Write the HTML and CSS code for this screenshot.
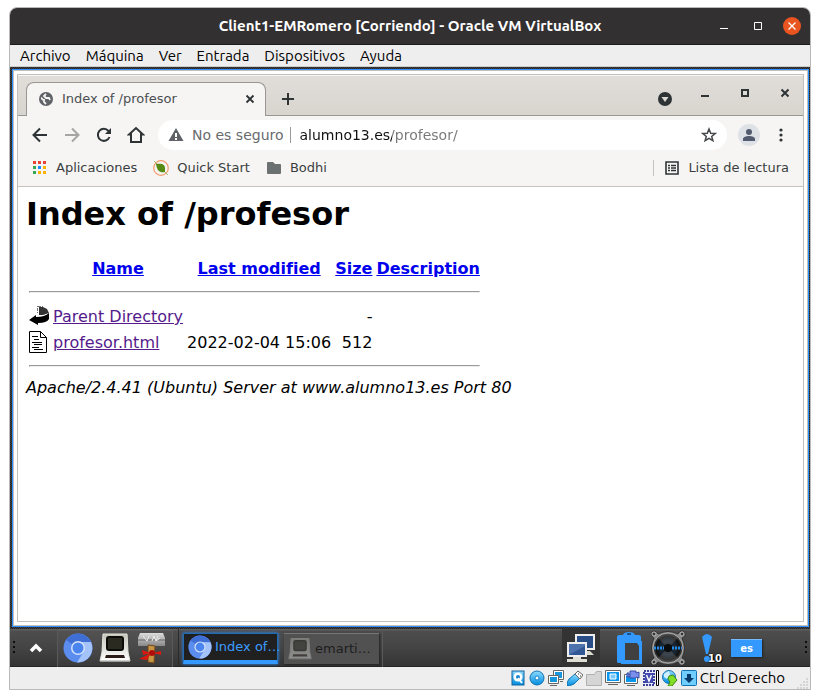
FILE: index.html
```html
<!DOCTYPE html>
<html lang="es">
<head>
<meta charset="utf-8">
<meta name="viewport" content="width=device-width, initial-scale=1">
<title>Client1-EMRomero [Corriendo] - Oracle VM VirtualBox</title>
<link rel="stylesheet" href="styles.css">
</head>
<body>
<svg class="defs" width="0" height="0" aria-hidden="true">
  <defs>
    <linearGradient id="blue" x1="0" y1="0" x2="0" y2="1"><stop offset="0" stop-color="#8edcff"/><stop offset="1" stop-color="#008ce0"/></linearGradient>
    <linearGradient id="cream" x1="0" y1="0" x2="0" y2="1"><stop offset="0" stop-color="#c3c4b8"/><stop offset="1" stop-color="#fff"/></linearGradient>
    <linearGradient id="steel" x1="0" y1="0" x2="0" y2="1"><stop offset="0" stop-color="#ddd"/><stop offset="1" stop-color="#888"/></linearGradient>
    <radialGradient id="cone"><stop offset="0" stop-color="#111"/><stop offset=".45" stop-color="#1b2a38"/><stop offset=".8" stop-color="#111"/><stop offset="1" stop-color="#555"/></radialGradient>
    <symbol id="chromium" viewBox="0 0 30 30">
      <circle cx="15" cy="15" r="14.500" fill="#5b8def"/>
      <path d="M15 15 3 7A14.500 14.500 0 0 1 28 9H15z" fill="#3f6fd4"/>
      <path d="M15 9H28A14.500 14.500 0 0 1 14 29.500L21 18z" fill="#a3c3fa"/>
      <circle cx="15" cy="15" r="7" fill="#d4e2fc"/><circle cx="15" cy="15" r="5.500" fill="#4a84ee"/>
    </symbol>
    <symbol id="terminal" viewBox="0 0 32 30">
      <path d="M4 1h24l1 18 2 9H1l2-9z" fill="url(#cream)" stroke="#e5e5dd"/>
      <rect x="7" y="3" width="18" height="15" rx="3" fill="#0b0b08"/><path d="M9 5h14v11H9z" fill="#2b2a20"/>
      <path d="M7 22h18l1 3H6z" fill="#2b1c18"/><path d="M1 28h30" stroke="#aaa"/>
    </symbol>
  </defs>
</svg>
<main class="window">
  <header class="titlebar">
    <h1 class="window-title">Client1-EMRomero [Corriendo] - Oracle VM VirtualBox</h1>
    <div class="window-buttons">
      <button type="button" aria-label="Minimizar"><svg width="18" height="18"><path d="M5 11h8v1H5z" fill="#fff"/></svg></button>
      <button type="button" aria-label="Maximizar"><svg width="18" height="18"><path d="M5.500 5.500h7v7h-7z" fill="none" stroke="#fff"/></svg></button>
      <button type="button" aria-label="Cerrar"><svg width="18" height="18"><circle cx="9" cy="9" r="9" fill="#e95420"/><path d="m5.500 5.500 7 7m0-7-7 7" stroke="#fff" stroke-width="1.300"/></svg></button>
    </div>
  </header>
  <nav class="menubar">
    <button type="button">Archivo</button><button type="button">Máquina</button><button type="button">Ver</button><button type="button">Entrada</button><button type="button">Dispositivos</button><button type="button">Ayuda</button>
  </nav>
  <div class="guest">
    <section class="desktop">
      <article class="browser">
        <div class="tabstrip">
          <div class="tab">
            <svg width="16" height="16"><circle cx="8" cy="8" r="7" fill="#5f6368"/><path d="M3 7c1 0 1 2 3 2v2l2 2M8 3 6 5l2 2h3l1 2" fill="none" stroke="#f6f5f4" stroke-width="1.800"/></svg>
            <span class="tab-title">Index of /profesor</span>
            <button type="button" aria-label="Cerrar pestaña"><svg width="16" height="16"><path d="m4.500 4.500 7 7m0-7-7 7" stroke="#2e3436" stroke-width="1.800"/></svg></button>
          </div>
          <button type="button" class="new-tab" aria-label="Nueva pestaña"><svg width="16" height="16"><path d="M8 2v12M2 8h12" stroke="#2e3436" stroke-width="2"/></svg></button>
          <div class="browser-buttons">
            <button type="button" class="tab-search" aria-label="Buscar pestañas"><svg width="16" height="16"><circle cx="8" cy="8" r="7" fill="#2e3436"/><path d="M4.500 6h7L8 11z" fill="#dedbd7"/></svg></button>
            <button type="button" aria-label="Minimizar"><svg width="16" height="16"><path d="M4 10h8v2H4z" fill="#2e3436"/></svg></button>
            <button type="button" aria-label="Maximizar"><svg width="16" height="16"><path d="M5 5h6v6H5z" fill="none" stroke="#2e3436" stroke-width="2"/></svg></button>
            <button type="button" aria-label="Cerrar"><svg width="16" height="16"><path d="m4.500 4.500 7 7m0-7-7 7" stroke="#2e3436" stroke-width="2"/></svg></button>
          </div>
        </div>
        <div class="toolbar">
          <button type="button" aria-label="Atrás"><svg width="16" height="16"><path d="M15 8H2.500M8 1.500 1.500 8 8 14.500" fill="none" stroke="#2e3436" stroke-width="2"/></svg></button>
          <button type="button" aria-label="Adelante"><svg width="16" height="16"><path d="M1 8h12.500M8 1.500 14.500 8 8 14.500" fill="none" stroke="#a5a5a3" stroke-width="2"/></svg></button>
          <button type="button" aria-label="Recargar"><svg width="16" height="16"><path d="M13.500 10A6 6 0 1 1 12.500 4" fill="none" stroke="#2e3436" stroke-width="2"/><path d="M15 1v6H9z" fill="#2e3436"/></svg></button>
          <button type="button" aria-label="Inicio"><svg width="18" height="18"><path d="M4 8.500V16h10V8.500h2L9 2 2 8.500z" fill="none" stroke="#2e3436" stroke-width="2"/></svg></button>
          <form class="address-bar">
            <svg width="16" height="16"><path d="m8 1 7.500 13H.5z" fill="#5f6368"/><path d="M7 6h2v4H7zm0 5h2v2H7z" fill="#fff"/></svg>
            <label class="insecure" for="url">No es seguro</label>
            <input id="url" class="url" type="text" value="alumno13.es/profesor/">
            <button type="button" aria-label="Marcador"><svg width="16" height="16"><path d="m8 2 1.700 4.200 4.500.3-3.500 2.900 1.200 4.300L8 11.300l-3.900 2.400 1.200-4.300-3.500-2.900 4.500-.3z" fill="none" stroke="#45484b" stroke-width="1.500"/></svg></button>
          </form>
          <button type="button" aria-label="Perfil"><svg width="22" height="22"><circle cx="11" cy="11" r="11" fill="#dee1e6"/><circle cx="11" cy="8" r="3" fill="#515a6e"/><path d="M5 17v-2c0-4 12-4 12 0v2z" fill="#515a6e"/></svg></button>
          <button type="button" aria-label="Menú"><svg width="16" height="16" fill="#2e3436"><circle cx="8" cy="3" r="1.600"/><circle cx="8" cy="8" r="1.600"/><circle cx="8" cy="13" r="1.600"/></svg></button>
        </div>
        <nav class="bookmarks">
          <button type="button"><svg width="16" height="16"><path d="M1 1h3v3H1zm5 0h3v3H6zm5 0h3v3h-3z" fill="#ea4335"/><path d="M1 6h3v3H1zM1 11h3v3H1z" fill="#34a853"/><path d="M6 6h3v3H6z" fill="#1a88ff"/><path d="M11 6h3v3h-3zM6 11h3v3H6zM11 11h3v3h-3z" fill="#fbb300"/></svg>Aplicaciones</button>
          <button type="button"><svg width="16" height="16"><circle cx="8" cy="8" r="7.300" fill="none" stroke="#f59a69" stroke-width="1.200"/><path d="m1 1 14 14" stroke="#a5bd79"/><path d="M3 4c5-1 9 0 9 4v4c-5 1-8-1-9-8" fill="#568a13"/></svg>Quick Start</button>
          <button type="button"><svg width="16" height="16"><path d="M1 3q0-1 1-1h5l2 2h5q1 0 1 1v8q0 1-1 1H2q-1 0-1-1z" fill="#6b7071"/></svg>Bodhi</button>
          <button type="button" class="reading"><svg width="16" height="16"><path d="M2 2h12v12H2z" fill="none" stroke="#2e3436" stroke-width="1.600"/><path d="M4 5.500h2m1 0h5M4 8h2m1 0h5M4 10.500h2m1 0h5" stroke="#2e3436" stroke-width="1.400"/></svg>Lista de lectura</button>
        </nav>
        <div class="page">
          <h2>Index of /profesor</h2>
          <table>
            <thead>
              <tr><th></th><th><a href="#">Name</a></th><th><a href="#">Last modified</a></th><th><a href="#">Size</a></th><th><a href="#">Description</a></th></tr>
            </thead>
            <tbody>
              <tr><td colspan="5"><hr></td></tr>
              <tr><td><svg width="20" height="22"><path d="M8.500 1v8M10.500 1v8M9 1.500h5M8 4.500h7" stroke="#777" stroke-dasharray="1 1"/><path d="M10 2h4l4 2 2 4-6 2h-4z" fill="#333"/><path d="M20 8v6q-2 4-11 4v2L0 15l7-5v2q9 0 13-4" fill="#000"/></svg></td><td><a class="visited" href="#">Parent Directory</a></td><td></td><td class="num">-</td><td></td></tr>
              <tr><td><svg width="20" height="22" fill="none" stroke="#000"><path d="M.5.500h11l6 6v15H.5zM11.500.500v6h6M3 5.500h6M5 8.500h5M3 11.500h10M5 13.500h8M3 16.500h7M5 18.500h9"/></svg></td><td><a class="visited" href="#">profesor.html</a></td><td class="num">2022-02-04 15:06</td><td class="num">512</td><td></td></tr>
              <tr><td colspan="5"><hr></td></tr>
            </tbody>
          </table>
          <address>Apache/2.4.41 (Ubuntu) Server at www.alumno13.es Port 80</address>
        </div>
      </article>
    </section>
  </div>
  <div class="taskbar">
    <span class="grip"></span>
    <button type="button" class="expand" aria-label="Mostrar menú"><svg width="14" height="12"><path d="m2 9 5-5 5 5" fill="none" stroke="#fff" stroke-width="3.500"/></svg></button>
    <div class="launchers">
      <button type="button" aria-label="Chromium"><svg width="30" height="30"><use href="#chromium"/></svg></button>
      <button type="button" aria-label="Terminal"><svg width="32" height="30"><use href="#terminal"/></svg></button>
      <button type="button" aria-label="Archivos"><svg width="30" height="32"><path d="M3 1h23l2 5v8H1V6z" fill="url(#steel)"/><path d="M1 8h27" stroke="#666"/><path d="m6 4 4 5 2-5m3 5 2-5 2 5m2-5-2 5 4-3" fill="none" stroke="#eee"/><path d="m11 13 7 1-1 17-6-1z" fill="#c79543" stroke="#74461b"/><path d="m14 21-9-3 1 5zm2 0 8-2v4zm-2 0-4 7-8-1 6-3z" fill="#d91910"/><circle cx="15" cy="21" r="3" fill="#b00c0c"/></svg></button>
    </div>
    <div class="tasks">
      <button type="button" class="task active"><svg width="24" height="24"><use href="#chromium"/></svg>Index of…</button>
      <button type="button" class="task"><svg width="24" height="24" opacity=".35"><use href="#terminal"/></svg>emarti…</button>
    </div>
    <div class="tray">
      <button type="button" class="network" aria-label="Red"><svg width="30" height="28"><path d="M10 1h18v14H10z" fill="#294d86" stroke="#eee" stroke-width="2"/><path d="M16 17h8l4 4H14z" fill="#d9d9d0"/><path d="M2 9h18v13H2z" fill="#315795" stroke="#eee" stroke-width="2"/><path d="m3 21 16-9v-2H3z" fill="#4e73ac"/><path d="M7 23h8v2h6v3H1v-3h6z" fill="#deded4"/></svg></button>
      <button type="button" class="clipboard" aria-label="Portapapeles"><svg width="28" height="34"><path d="M2 6q0-2 2-2h4q1-3 6-3t6 3h4q2 0 2 2v4h1v23H6v-1H3q-1 0-1-2z" fill="#3399ff"/><path d="M10 12h12l2 3v14H10z" fill="#404040"/><path d="M12 3h4" stroke="#185487" stroke-width="2"/></svg></button>
      <button type="button" class="speaker" aria-label="Volumen"><svg width="36" height="36"><path d="M3 1q4 0 5 3 10-5 20 0 3-5 6-2 3 4-2 6 5 10 0 20 5 2 2 6-4 3-6-2-10 5-20 0-3 4-6 2-3-3 2-6-5-10 0-20-4-3-1-7" fill="#888" stroke="#333"/><circle cx="18" cy="18" r="15" fill="url(#cone)" stroke="#aaa"/><path d="M8 8 18 18 28 8Q18 0 8 8M8 28l10-10 10 10q-10 8-20 0" fill="#888" opacity=".3"/><path d="M4 18h10m8 0h10" stroke="#248be8" stroke-width="3" stroke-dasharray="2 1"/><circle cx="18" cy="18" r="4" fill="#090a0c"/><g fill="#333" stroke="#bbb"><circle cx="4" cy="4" r="2"/><circle cx="32" cy="4" r="2"/><circle cx="4" cy="32" r="2"/><circle cx="32" cy="32" r="2"/></g></svg></button>
      <button type="button" class="notice" aria-label="Avisos"><svg width="12" height="30"><path d="M1 4q5-6 10 0L7 21H5z" fill="#3399ff"/><circle cx="6" cy="26" r="3" fill="#3399ff"/></svg><span class="count">10</span></button>
      <button type="button" class="layout">es</button>
      <span class="grip"></span>
    </div>
  </div>
  <footer class="statusbar">
    <svg width="16" height="16"><rect x="2" y="1" width="12" height="14" fill="url(#blue)" stroke="#13639b"/><circle cx="8" cy="7" r="4.500" fill="#fff"/><circle cx="8" cy="7" r="2" fill="#1683cc"/><path d="m8 8 4 5" stroke="#fff" stroke-width="2"/></svg>
    <svg width="16" height="16"><circle cx="8" cy="8" r="7" fill="url(#blue)" stroke="#1474b4"/><circle cx="8" cy="8" r="2" fill="#fff" stroke="#1683cc"/></svg>
    <svg width="16" height="16"><path d="M5.500.5h10v9h-10z" fill="#fff" stroke="#666"/><path d="M7 2h7v6H7z" fill="#1596df"/><path d="M.5 5.500h10v8H.5z" fill="#fff" stroke="#666"/><path d="M2 7h7v5H2z" fill="#1596df"/><path d="M2 15.500h7m3-4h3" stroke="#666"/></svg>
    <svg width="16" height="16"><path d="m8 4 5 4-6 6q-4 2-7 2 0-5 2-7z" fill="url(#blue)" stroke="#1474b4"/><path d="m8 4 3-3 5 4-3 4z" fill="#fff" stroke="#666"/><path d="M11 4h1m1 2h1" stroke="#333"/></svg>
    <svg width="16" height="16"><path d="M.5 4.500h8l2-3h5v14H.5z" fill="#d5d5d5" stroke="#b0b0b0"/></svg>
    <svg width="16" height="16"><path d="M.5.500h15v12H.5z" fill="#fff" stroke="#666"/><path d="M2 2h12v9H2z" fill="#0997ed"/><path d="M5 4h6v5H5z" fill="#79caff" stroke="#fff"/><path d="M3 14.500h10" stroke="#666"/></svg>
    <svg width="16" height="16"><path d="M.5 4.500h13v9H.5z" fill="#fff" stroke="#666"/><path d="M2 6h10v6H2z" fill="#0997ed"/><path d="M3 15.500h8" stroke="#666"/><path d="M6 1h6v2l3-1v6l-3-1v1H6zM3 3h2v4H3z" fill="#7b8eeb" stroke="#394daa"/></svg>
    <svg width="16" height="16"><path d="M1 1h10v14H1z" fill="#e6e8ff" stroke="#3b449a" stroke-width="2" stroke-dasharray="2 1"/><path d="M2 3h8v10H2z" fill="#4149ac"/><path d="m3.500 5 2.500 6L8.500 5" fill="none" stroke="#fff" stroke-width="1.500"/><path d="M13.500.5h2v15h-2z" fill="#fff" stroke="#000"/></svg>
    <svg width="16" height="16"><circle cx="7" cy="7" r="6.500" fill="url(#blue)" stroke="#1474b4"/><path d="M2 4 7 1l1 4-3 4-3-2" fill="#d1efff"/><path d="m7 6 4-1 4 5-5 6H6l2-4-2-3z" fill="#82df28" stroke="#428717"/></svg>
    <svg width="16" height="16"><rect x=".5" y=".5" width="15" height="15" rx="1" fill="#70ceff" stroke="#1371b1"/><path d="M6 4h4v4h3l-5 5-5-5h3z" fill="#073b6b"/></svg>
    <span class="host-key">Ctrl Derecho</span>
    <svg class="resize" width="12" height="12"><path d="M10 1v2M7 4v2m3-2v2M4 7v2m3-2v2m3-2v2M1 10v2m3-2v2m3-2v2m3-2v2" stroke="#bbb"/></svg>
  </footer>
</main>
</body>
</html>
```

FILE: styles.css
```css
* { box-sizing: border-box; }

body {
  margin: 0;
  min-height: 100vh;
  padding: 7px 9px 9px;
  display: flex;
  background: #fff;
  color: #000;
  font-family: "DejaVu Sans", Verdana, sans-serif;
}

svg { display: block; flex: none; }
.defs { position: absolute; }

button {
  display: flex;
  align-items: center;
  justify-content: center;
  padding: 0;
  border: 0;
  background: none;
  color: inherit;
  font: inherit;
  white-space: nowrap;
}

.window {
  flex: 1;
  min-width: 0;
  display: flex;
  flex-direction: column;
  border: 1px solid #b9b9b9;
  border-radius: 8px 8px 0 0;
  overflow: hidden;
  background: #eee;
}

.titlebar {
  display: grid;
  grid-template-columns: 1fr auto 1fr;
  align-items: center;
  height: 37px;
  border-bottom: 1px solid #1c1a1b;
  background: #333031;
  color: #fff;
}
.window-title {
  grid-column: 2;
  margin: 0;
  font: bold 15px/20px Ubuntu, "Noto Sans", sans-serif;
  white-space: nowrap;
}
.window-buttons {
  display: flex;
  justify-content: flex-end;
  gap: 16px;
  padding-right: 9px;
}

.menubar {
  display: flex;
  gap: 15px;
  height: 22px;
  padding-left: 10px;
  border-bottom: 1px solid #ccc;
  font: 15px/20px Ubuntu, "Noto Sans", sans-serif;
}

.guest {
  flex: 1;
  display: flex;
  padding: 2px 1px 2px 2px;
  background: repeating-conic-gradient(#222 0 25%, #444 0 50%) 0 0 / 2px 2px;
}
.desktop {
  flex: 1;
  min-width: 0;
  display: flex;
  padding: 4px;
  border: 1px solid #2c8fff;
  background: #fff;
  box-shadow: inset 0 0 0 1px #c4c0bc;
}
.browser {
  flex: 1;
  min-width: 0;
  display: flex;
  flex-direction: column;
  border: 1px solid #c3bfba;
  background: #fff;
}

.tabstrip {
  display: flex;
  height: 41px;
  padding-left: 8px;
  background: linear-gradient(#e1deda, #d8d4ce);
  box-shadow: inset 0 1px #f8f7f6, inset 0 -1px #999693;
}
.tab {
  display: flex;
  align-items: center;
  gap: 8px;
  width: 240px;
  height: 34px;
  margin-top: 7px;
  padding: 0 7px 2px 11px;
  border: 1px solid #999693;
  border-bottom: 0;
  border-radius: 8px 8px 0 0;
  background: #f6f5f4;
  color: #4a4e50;
  font-size: 13px;
}
.tab-title { flex: 1; white-space: nowrap; }
.new-tab { width: 44px; padding-top: 6px; }
.browser-buttons {
  display: flex;
  gap: 4px;
  margin-left: auto;
}
.browser-buttons button { width: 36px; padding-bottom: 6px; }
.browser-buttons .tab-search { padding: 6px 0 0; }

.toolbar {
  display: flex;
  align-items: center;
  height: 38px;
  padding: 0 6px;
  background: #f6f5f4;
}
.toolbar > button { width: 32px; height: 32px; }
.address-bar {
  flex: 1;
  min-width: 0;
  display: flex;
  align-items: center;
  height: 30px;
  margin: 0 6px;
  padding: 0 10px;
  border-radius: 15px;
  background: #fff;
  font-size: 14px;
}
.insecure {
  margin: 0 6px 0 8px;
  color: #686b6e;
  white-space: nowrap;
}
.url {
  flex: 1;
  min-width: 0;
  height: 16px;
  padding: 0 0 0 9px;
  border: 0;
  border-left: 1px solid #999;
  outline: 0;
  background: linear-gradient(90deg, #111 101px, #777 101px) text;
  color: transparent;
  font: inherit;
}

.bookmarks {
  display: flex;
  align-items: center;
  gap: 16px;
  height: 33px;
  padding: 0 14px 5px;
  border-bottom: 1px solid #c8c3bc;
  background: #f6f5f4;
  color: #3a3e40;
  font-size: 13px;
}
.bookmarks button { gap: 8px; height: 16px; }
.bookmarks .reading {
  margin-left: auto;
  padding-left: 10px;
  border-left: 1px solid #c8c3bc;
}

.page { flex: 1; padding: 8px; font-size: 16px; }
h2 { margin: 0 0 23px; font-size: 32px; line-height: 38px; }
a { color: #00e; }
.visited { color: #551a8b; }
table { border-spacing: 2px; }
th, td { padding: 1px; line-height: 20px; white-space: nowrap; }
td { vertical-align: bottom; }
hr { margin: 8px 0; }
.num { text-align: right; }

.taskbar {
  display: flex;
  align-items: center;
  height: 38px;
  background: linear-gradient(#666 0, #4d4d4d 2px, #444 50%, #343434 97%, #191919);
  color: #fff;
}
.grip {
  width: 2px;
  height: 14px;
  margin-left: 3px;
  background: repeating-linear-gradient(#0c0c0c 0 2px, transparent 2px 5px);
}
.expand { width: 42px; }
.launchers {
  display: flex;
  align-items: center;
  gap: 6px;
  height: 38px;
  padding: 0 5px;
  border-left: 1px solid #5a5a5a;
  border-right: 1px solid #5a5a5a;
  background: #ffffff08;
}
.tasks {
  display: flex;
  align-items: center;
  gap: 6px;
  height: 38px;
  margin-left: 5px;
  padding: 0 3px 0 4px;
  border-left: 1px solid #2b2b2b;
  border-right: 1px solid #5a5a5a;
}
.task {
  justify-content: flex-start;
  gap: 3px;
  width: 95px;
  height: 31px;
  padding-left: 4px;
  border-top: 1px solid #777;
  background: #515151;
  box-shadow: 1px 1px 2px #222;
  color: #1d1d1d;
  font-size: 13px;
}
.task.active {
  border: 1px solid #216bb3;
  border-bottom: 4px solid #3399ff;
  background: #202020;
  box-shadow: 0 0 3px #268cff;
  color: #3d9cff;
}
.tray {
  display: flex;
  align-items: center;
  height: 38px;
  margin-left: auto;
}
.network { width: 38px; height: 38px; background: #333; }
.clipboard { margin: 0 7px 0 15px; }
.notice { position: relative; width: 12px; margin: 0 18px 0 15px; }
.count {
  position: absolute;
  left: 7px;
  bottom: -2px;
  color: #fff;
  font: bold 10px/12px "DejaVu Sans", sans-serif;
  text-shadow: 0 0 2px #000, 1px 1px #000;
}
.layout {
  width: 31px;
  height: 18px;
  border-top: 1px solid #78bcff;
  background: #3399ff;
  box-shadow: 1px 1px 2px #222;
  font-size: 10px;
  font-weight: bold;
}
.tray .grip { margin: 0 3px 0 43px; }

.statusbar {
  display: flex;
  align-items: center;
  justify-content: flex-end;
  gap: 3px;
  height: 22px;
  padding-right: 1px;
  font: 15px/20px Ubuntu, "Noto Sans", sans-serif;
}
.host-key { margin-right: 9px; white-space: nowrap; }
.resize { align-self: flex-end; }
```
